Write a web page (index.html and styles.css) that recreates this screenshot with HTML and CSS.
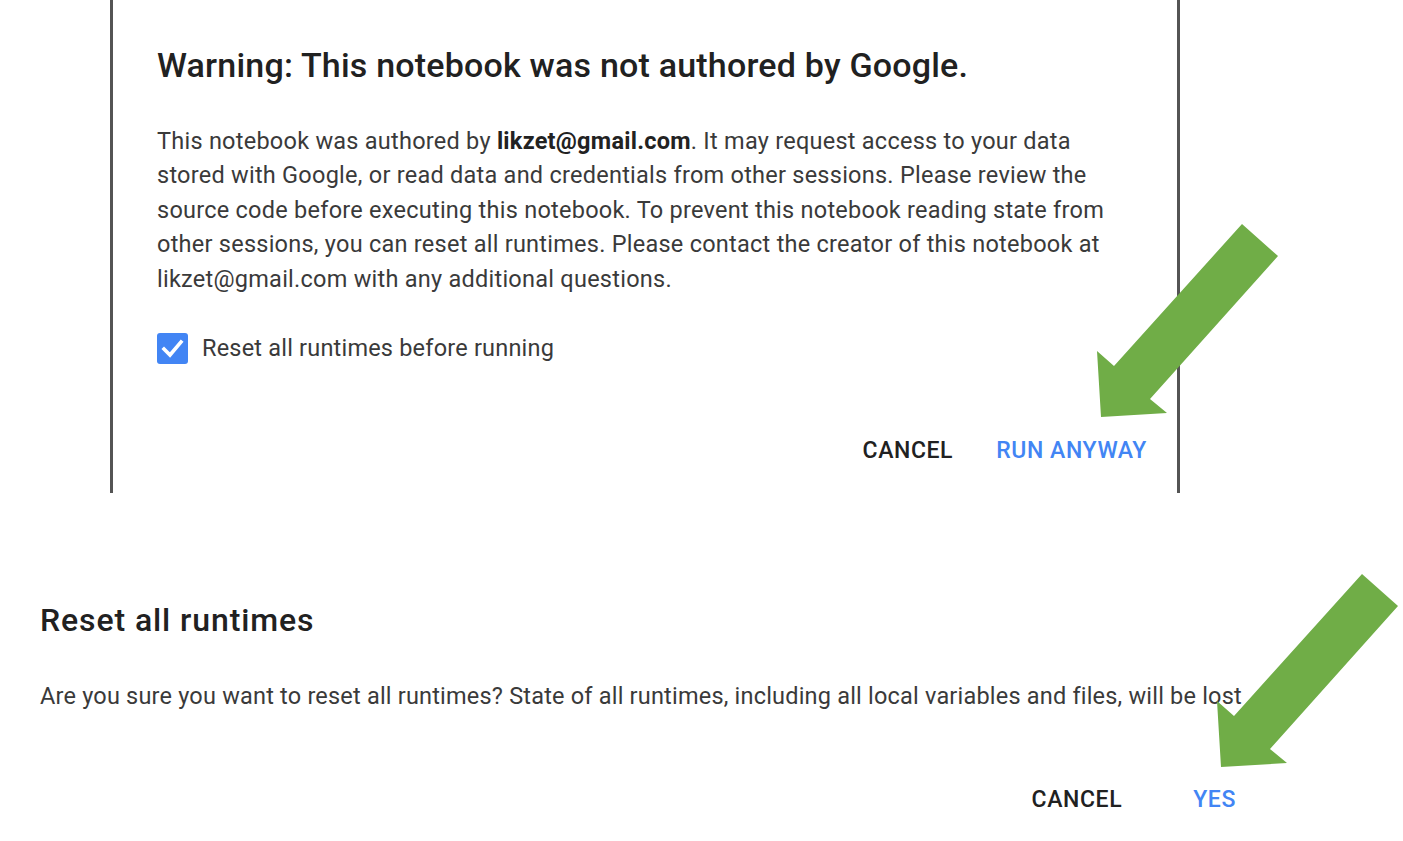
FILE: index.html
```html
<!DOCTYPE html>
<html>
<head>
<meta charset="utf-8">
<link rel="stylesheet" href="styles.css">
</head>
<body>
<div class="page">
  <section class="dialog dialog-top">
    <h1 class="title">Warning: This notebook was not authored by Google.</h1>
    <p class="body-text">This notebook was authored by <b>likzet@gmail.com</b>. It may request access to your data<br>stored with Google, or read data and credentials from other sessions. Please review the<br>source code before executing this notebook. To prevent this notebook reading state from<br>other sessions, you can reset all runtimes. Please contact the creator of this notebook at<br>likzet@gmail.com with any additional questions.</p>
    <label class="check-row">
      <span class="checkbox"><svg viewBox="0 0 31 31" width="31" height="31"><polyline points="7,16 13,22 24,9" fill="none" stroke="#fff" stroke-width="3.6" stroke-linecap="square"/></svg></span>
      <span class="check-label">Reset all runtimes before running</span>
    </label>
    <div class="actions actions-top">
      <span class="btn btn-cancel">CANCEL</span>
      <span class="btn btn-primary">RUN ANYWAY</span>
    </div>
  </section>

  <section class="dialog dialog-bottom">
    <h2 class="title title-small">Reset all runtimes</h2>
    <p class="body-text body-single">Are you sure you want to reset all runtimes? State of all runtimes, including all local variables and files, will be lost</p>
    <div class="actions actions-bottom">
      <span class="btn btn-cancel">CANCEL</span>
      <span class="btn btn-primary">YES</span>
    </div>
  </section>

  <svg class="arrow arrow-1" viewBox="0 0 195 205" width="195" height="205"><polygon points="152,4 188,36 60,179 77,193 11,197 7,131 24,146" fill="#70ad47"/></svg>
  <svg class="arrow arrow-2" viewBox="0 0 195 205" width="195" height="205"><polygon points="152,4 188,36 60,179 77,193 11,197 7,131 24,146" fill="#70ad47"/></svg>
</div>
</body>
</html>
```

FILE: styles.css
```css
html, body {
  margin: 0;
  padding: 0;
  background: #ffffff;
}

body {
  font-family: Roboto, "Liberation Sans", sans-serif;
  color: #212121;
}

.page {
  position: relative;
  width: 1403px;
  height: 841px;
  overflow: hidden;
}

.dialog {
  box-sizing: border-box;
}

.dialog-top {
  margin-left: 110px;
  width: 1070px;
  height: 493px;
  border-left: 3px solid #545454;
  border-right: 3px solid #545454;
  padding: 45px 30px 0 44px;
}

.title {
  margin: 0;
  font-size: 34px;
  line-height: 40px;
  font-weight: 500;
  letter-spacing: 0.2px;
  color: #212121;
}

.body-text {
  margin: 38.5px 0 0;
  font-size: 23.5px;
  line-height: 34.5px;
  letter-spacing: 0.25px;
  color: #3a3a3a;
  white-space: nowrap;
}

.body-text b {
  font-weight: 700;
  color: #222;
}

.check-row {
  display: flex;
  align-items: center;
  gap: 14px;
  margin-top: 37px;
  height: 31px;
}

.checkbox {
  display: block;
  width: 31px;
  height: 31px;
  border-radius: 3px;
  background: #4285f4;
}

.checkbox svg {
  display: block;
}

.check-label {
  font-size: 23.5px;
  line-height: 31px;
  letter-spacing: 0.2px;
  color: #3a3a3a;
}

.actions {
  display: flex;
  justify-content: flex-end;
  align-items: center;
}

.actions-top {
  margin-top: 69px;
  gap: 43px;
}

.btn {
  font-size: 23px;
  line-height: 36px;
  font-weight: 500;
  letter-spacing: 0.6px;
}

.btn-cancel {
  color: #212121;
}

.btn-primary {
  color: #4285f4;
}

.dialog-bottom {
  margin-top: 60px;
  width: 1290px;
  padding: 48px 54px 0 40px;
}

.title-small {
  font-size: 32px;
  line-height: 38px;
  font-weight: 500;
  letter-spacing: 0.9px;
}

.body-single {
  margin-top: 42px;
  font-size: 23.5px;
  line-height: 30px;
  letter-spacing: 0.2px;
}

.actions-bottom {
  margin-top: 71px;
  gap: 71px;
}

.arrow {
  position: absolute;
  display: block;
}

.arrow-1 {
  left: 1090px;
  top: 220px;
}

.arrow-2 {
  left: 1210px;
  top: 570px;
}
```
